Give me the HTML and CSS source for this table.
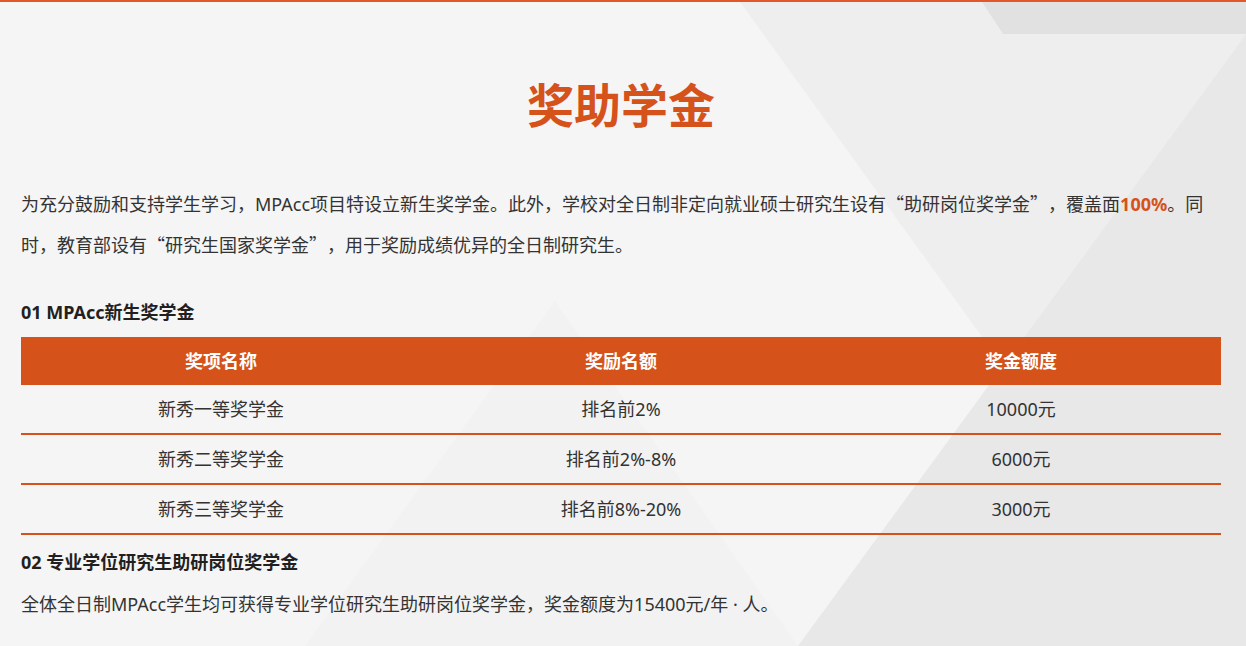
FILE: index.html
```html
<!DOCTYPE html>
<html lang="zh-CN">
<head>
<meta charset="utf-8">
<title>奖助学金</title>
<link rel="stylesheet" href="styles.css">
</head>
<body>
<svg class="bg" viewBox="0 0 1246 646" preserveAspectRatio="none" aria-hidden="true">
  <polygon points="555,300 798,646 305,646" fill="#f2f2f2"/>
  <polygon points="740,0 1246,0 1246,32 1003,365" fill="#eeeeee"/>
  <polygon points="1246,32 1246,646 798,646" fill="#e8e8e8"/>
  <polygon points="982,0 1246,0 1246,32 1003,32" fill="#e1e1e1"/>
</svg>
<main class="wrap">
  <h1 class="title">奖助学金</h1>
  <p class="intro">为充分鼓励和支持学生学习，MPAcc项目特设立新生奖学金。此外，学校对全日制非定向就业硕士研究生设有<span class="cjk">“助研岗位奖学金”，</span>覆盖面<b class="hl">100%</b>。同时，教育部设有<span class="cjk">“研究生国家奖学金”，</span>用于奖励成绩优异的全日制研究生。</p>
  <h3 class="sub">01 MPAcc新生奖学金</h3>
  <table class="award">
    <thead>
      <tr><th>奖项名称</th><th>奖励名额</th><th>奖金额度</th></tr>
    </thead>
    <tbody>
      <tr><td>新秀一等奖学金</td><td>排名前2%</td><td>10000元</td></tr>
      <tr><td>新秀二等奖学金</td><td>排名前2%-8%</td><td>6000元</td></tr>
      <tr><td>新秀三等奖学金</td><td>排名前8%-20%</td><td>3000元</td></tr>
    </tbody>
  </table>
  <h3 class="sub sub-2">02 专业学位研究生助研岗位奖学金</h3>
  <p class="body">全体全日制MPAcc学生均可获得专业学位研究生助研岗位奖学金，奖金额度为15400元/年 · 人。</p>
</main>
</body>
</html>
```

FILE: styles.css
```css
html, body {
  margin: 0;
  height: 100%;
}

body {
  position: relative;
  overflow: hidden;
  background: #f5f5f5;
  border-top: 2px solid #e0592a;
  box-sizing: border-box;
  font-family: "Noto Sans", "Noto Sans CJK SC", sans-serif;
  color: #333333;
  text-spacing-trim: space-all;
}

.bg {
  position: absolute;
  left: 0;
  top: 0;
  width: 100%;
  height: 100%;
  z-index: 0;
}

.wrap {
  position: relative;
  z-index: 1;
  width: 1200px;
  margin-left: 21px;
}

.title {
  margin: 71px 0 0;
  font-size: 47px;
  line-height: 60px;
  font-weight: 700;
  text-align: center;
  color: #d5521b;
  font-family: "Noto Sans CJK SC", sans-serif;
}

.intro {
  margin: 50px 0 0;
  font-size: 18px;
  line-height: 40px;
}

.cjk {
  font-family: "Noto Sans CJK SC", sans-serif;
  text-spacing-trim: space-all;
}

.hl {
  color: #d5521b;
  font-weight: 700;
}

.sub {
  margin: 35px 0 0;
  font-size: 18px;
  line-height: 24px;
  font-weight: 700;
  color: #231f1f;
}

.sub-2 {
  margin-top: 15px;
}

.award {
  width: 100%;
  margin-top: 13px;
  border-collapse: separate;
  border-spacing: 0;
  table-layout: fixed;
  font-size: 18px;
}

.award th {
  padding: 0;
  line-height: 48px;
  background: #d5521b;
  color: #ffffff;
  font-weight: 700;
  text-align: center;
}

.award td {
  padding: 0;
  line-height: 48px;
  text-align: center;
  color: #333333;
  border-bottom: 2px solid #d5521b;
}

.body {
  margin: 10px 0 0;
  font-size: 18px;
  line-height: 40px;
}
```
